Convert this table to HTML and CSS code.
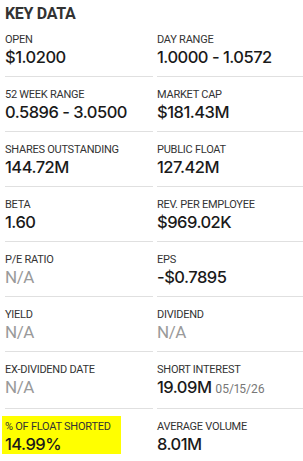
FILE: index.html
```html
<!DOCTYPE html>
<html>
<head>
<meta charset="utf-8">
<link rel="stylesheet" href="styles.css">
</head>
<body>
<section class="key-data">
  <h2 class="title">KEY DATA</h2>
  <div class="grid">
    <div class="cell"><div class="label">OPEN</div><div class="value">$1.0200</div></div>
    <div class="cell"><div class="label">DAY RANGE</div><div class="value">1.0000 - 1.0572</div></div>
    <div class="cell"><div class="label">52 WEEK RANGE</div><div class="value">0.5896 - 3.0500</div></div>
    <div class="cell"><div class="label">MARKET CAP</div><div class="value">$181.43M</div></div>
    <div class="cell"><div class="label">SHARES OUTSTANDING</div><div class="value">144.72M</div></div>
    <div class="cell"><div class="label">PUBLIC FLOAT</div><div class="value">127.42M</div></div>
    <div class="cell"><div class="label">BETA</div><div class="value">1.60</div></div>
    <div class="cell"><div class="label">REV. PER EMPLOYEE</div><div class="value">$969.02K</div></div>
    <div class="cell"><div class="label">P/E RATIO</div><div class="value na">N/A</div></div>
    <div class="cell"><div class="label">EPS</div><div class="value">-$0.7895</div></div>
    <div class="cell"><div class="label">YIELD</div><div class="value na">N/A</div></div>
    <div class="cell"><div class="label">DIVIDEND</div><div class="value na">N/A</div></div>
    <div class="cell"><div class="label">EX-DIVIDEND DATE</div><div class="value na">N/A</div></div>
    <div class="cell"><div class="label">SHORT INTEREST</div><div class="value">19.09M <span class="date">05/15/26</span></div></div>
    <div class="cell"><div class="highlight"><div class="label">% OF FLOAT SHORTED</div><div class="value">14.99%</div></div></div>
    <div class="cell"><div class="label">AVERAGE VOLUME</div><div class="value">8.01M</div></div>
  </div>
</section>
</body>
</html>
```
FILE: styles.css
```css
html, body {
  margin: 0;
  padding: 0;
  background: #fff;
}
body {
  font-family: Roboto, "Liberation Sans", sans-serif;
  color: #222;
}
.key-data {
  padding-left: 5px;
}
.title {
  margin: 0;
  padding-top: 5px;
  font-size: 16px;
  line-height: 17px;
  font-weight: 700;
  color: #333;
  letter-spacing: -0.3px;
}
.grid {
  display: grid;
  grid-template-columns: 148px 146px;
  column-gap: 4px;
}
.cell {
  padding: 11px 0 9px;
  border-bottom: 1px solid #e0e0e0;
}
.label {
  font-size: 11px;
  line-height: 13px;
  color: #333;
  letter-spacing: -0.25px;
  white-space: nowrap;
}
.value {
  margin-top: 1px;
  font-family: Inter, Roboto, sans-serif;
  font-size: 16.5px;
  line-height: 20px;
  font-weight: 500;
  color: #1a1a1a;
  letter-spacing: -0.5px;
  font-variant-numeric: proportional-nums;
  white-space: nowrap;
}
.value.na {
  color: #9a9a9a;
  font-family: Roboto, sans-serif;
  font-weight: 400;
  font-size: 17px;
}
.date {
  font-family: Roboto, sans-serif;
  font-weight: 400;
  font-size: 12px;
  color: #777;
  letter-spacing: 0;
}
.highlight {
  background: #ffff00;
  margin: -4px 0 0 -3px;
  padding: 4px 0 0 3px;
  width: 116px;
}
```
